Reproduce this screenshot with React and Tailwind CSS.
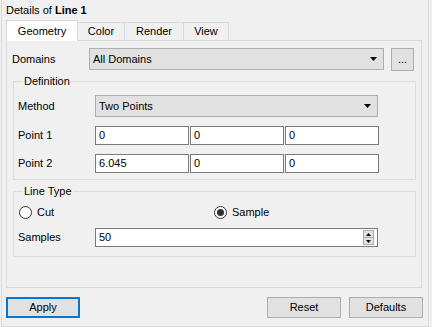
import React from 'react'

function Arrow() {
  return (
    <svg width="7" height="4" viewBox="0 0 7 4">
      <path d="M0 0H7L3.5 4Z" fill="#000" />
    </svg>
  )
}

function Combo({ value, width }) {
  return (
    <div
      className={`h-[22px] ${width} bg-[#e1e1e1] border border-[#adadad] flex items-center justify-between pl-[3px] pr-[6px]`}
    >
      <span>{value}</span>
      <Arrow />
    </div>
  )
}

function Field({ value }) {
  return (
    <div className="h-[19px] w-[94px] bg-white border border-[#7a7a7a] flex items-center pl-[3px]">
      {value}
    </div>
  )
}

function Radio({ checked, label }) {
  return (
    <div className="flex items-center gap-[5px]">
      <div className="w-[13px] h-[13px] rounded-full border border-[#333] bg-white flex items-center justify-center">
        {checked && <div className="w-[7px] h-[7px] rounded-full bg-[#333]" />}
      </div>
      <span>{label}</span>
    </div>
  )
}

function Button({ label, primary }) {
  return (
    <div
      className={`h-[21px] w-[74px] bg-[#e1e1e1] flex items-center justify-center ${
        primary ? 'border-2 border-[#0078d7]' : 'border border-[#adadad]'
      }`}
    >
      {label}
    </div>
  )
}

const tabs = [
  { name: 'Color', w: 'w-[47px]' },
  { name: 'Render', w: 'w-[59px]' },
  { name: 'View', w: 'w-[45px]' },
]

export default function App() {
  return (
    <div
      className="w-[432px] h-[327px] bg-[#f0f0f0] overflow-hidden text-[11px] text-black"
      style={{ fontFamily: '"Liberation Sans", Arial, sans-serif' }}
    >
      <div className="ml-[1px] w-[428px] h-[327px] border-x border-b border-[#dadada] flex flex-col">
        <div className="h-[20px] leading-[20px] pl-[4px]">
          Details of <span className="font-bold">Line 1</span>
        </div>

        <div className="h-[20px] flex items-end pl-[4px]">
          <div className="relative z-10 -mb-px h-[21px] w-[72px] bg-white border-t border-x border-[#d9d9d9] flex items-center justify-center">
            Geometry
          </div>
          {tabs.map(t => (
            <div
              key={t.name}
              className={`h-[18px] ${t.w} border-t border-r border-[#d9d9d9] flex items-center justify-center`}
            >
              {t.name}
            </div>
          ))}
        </div>

        <div className="ml-[4px] w-[416px] h-[248px] border border-[#d9d9d9] flex flex-col">
          <div className="mt-[7px] pl-[5px] flex items-start">
            <div className="w-[77px] h-[22px] flex items-center">Domains</div>
            <Combo value="All Domains" width="w-[295px]" />
            <div className="ml-[7px] w-[23px] h-[23px] bg-[#e1e1e1] border border-[#adadad] flex items-center justify-center">
              ...
            </div>
          </div>

          <fieldset className="mt-[4px] ml-[6px] w-[403px] border border-[#dcdcdc] pl-[4px] pt-[7px] pb-[6px]">
            <legend className="ml-[5px] px-[1px] leading-[13px]">Definition</legend>
            <div className="flex items-center">
              <div className="w-[77px]">Method</div>
              <Combo value="Two Points" width="w-[283px]" />
            </div>
            <div className="mt-[9px] flex items-center">
              <div className="w-[77px]">Point 1</div>
              <div className="flex gap-[1px]">
                <Field value="0" />
                <Field value="0" />
                <Field value="0" />
              </div>
            </div>
            <div className="mt-[9px] flex items-center">
              <div className="w-[77px]">Point 2</div>
              <div className="flex gap-[1px]">
                <Field value="6.045" />
                <Field value="0" />
                <Field value="0" />
              </div>
            </div>
          </fieldset>

          <fieldset className="mt-[5px] ml-[6px] w-[403px] border border-[#dcdcdc] pl-[4px] pt-[7px] pb-[9px]">
            <legend className="ml-[5px] px-[1px] leading-[13px]">Line Type</legend>
            <div className="h-[14px] flex items-center pl-[1px]">
              <div className="w-[195px]">
                <Radio label="Cut" />
              </div>
              <Radio checked label="Sample" />
            </div>
            <div className="mt-[9px] flex items-center">
              <div className="w-[77px]">Samples</div>
              <div className="h-[19px] w-[283px] bg-white border border-[#7a7a7a] flex items-center justify-between pl-[3px] pr-[3px]">
                <span>50</span>
                <div className="w-[11px] h-[15px] flex flex-col border border-[#adadad]">
                  <div className="flex-1 bg-[#e1e1e1] border-b border-[#adadad] flex items-center justify-center">
                    <svg width="5" height="3" viewBox="0 0 5 3">
                      <path d="M0 3H5L2.5 0Z" fill="#000" />
                    </svg>
                  </div>
                  <div className="flex-1 bg-[#e1e1e1] flex items-center justify-center">
                    <svg width="5" height="3" viewBox="0 0 5 3">
                      <path d="M0 0H5L2.5 3Z" fill="#000" />
                    </svg>
                  </div>
                </div>
              </div>
            </div>
          </fieldset>
        </div>

        <div className="mt-[9px] pl-[4px] pr-[5px] flex items-center">
          <Button label="Apply" primary />
          <div className="ml-auto flex gap-[8px]">
            <Button label="Reset" />
            <Button label="Defaults" />
          </div>
        </div>
      </div>
    </div>
  )
}
